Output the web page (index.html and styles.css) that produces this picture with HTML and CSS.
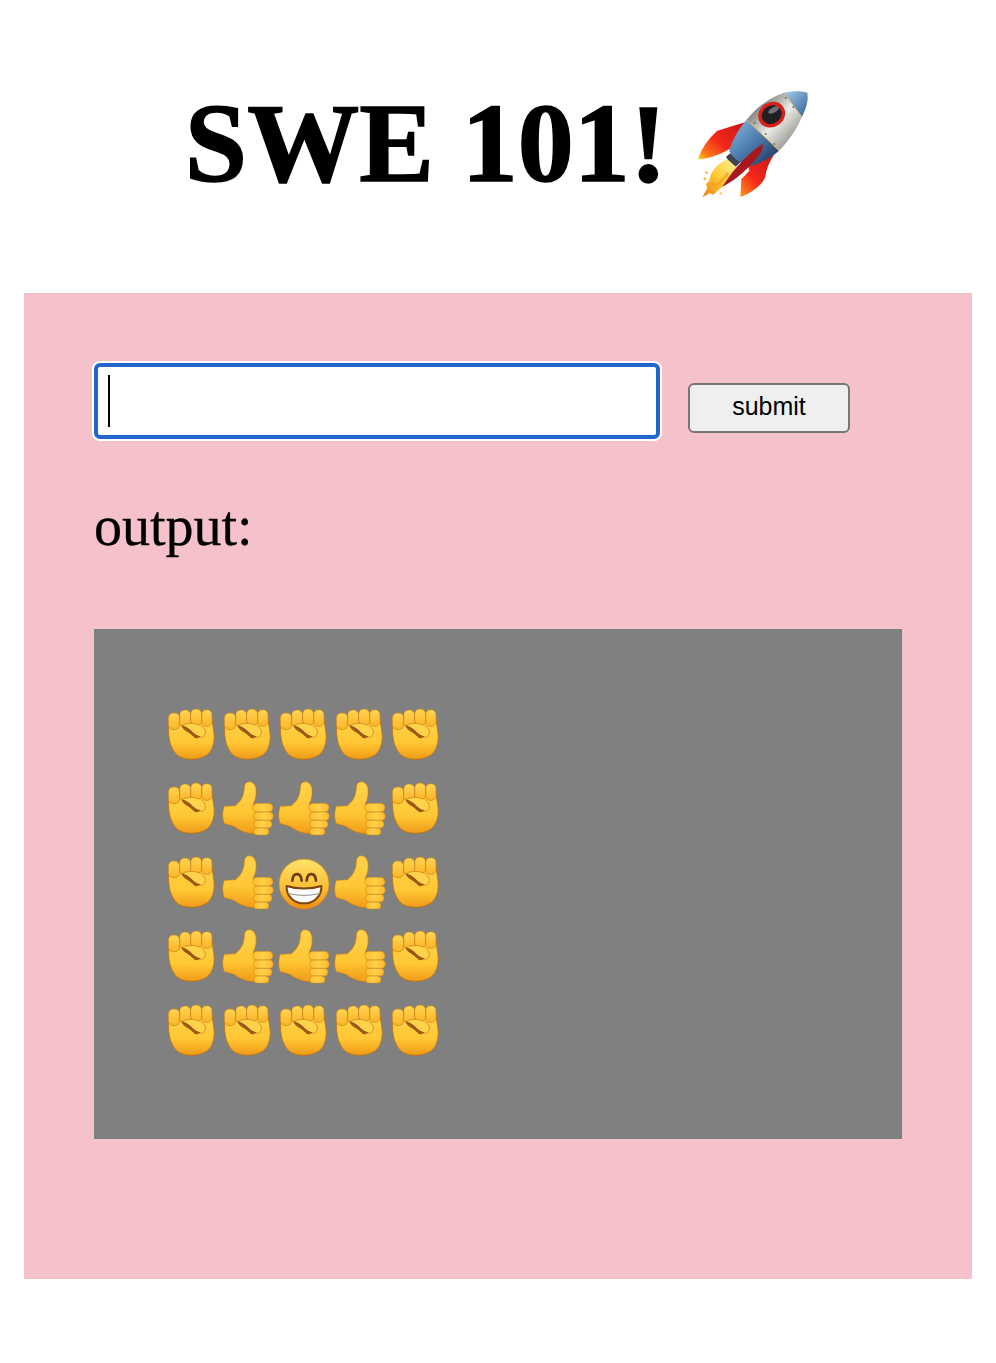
FILE: index.html
```html
<!DOCTYPE html>
<html lang="en">
<head>
<meta charset="utf-8">
<title>SWE 101!</title>
<link rel="stylesheet" href="styles.css">
</head>
<body>
<svg class="defs" aria-hidden="true">
  <defs>
    <linearGradient id="skin" x1="0" y1="0" x2="0" y2="1"><stop offset="0" stop-color="#ffd24c"/><stop offset=".6" stop-color="#ffc733"/><stop offset="1" stop-color="#f09a18"/></linearGradient>
    <linearGradient id="finger" x1="0" y1="0" x2="0" y2="1"><stop offset="0" stop-color="#ffd552"/><stop offset="1" stop-color="#fdb428"/></linearGradient>
    <linearGradient id="digit" x1="0" y1="0" x2="1" y2="0"><stop offset="0" stop-color="#ffbd2e"/><stop offset=".5" stop-color="#ffd149"/><stop offset="1" stop-color="#fdb92d"/></linearGradient>
    <linearGradient id="face" x1="0" y1="0" x2="0" y2="1"><stop offset="0" stop-color="#ffe36b"/><stop offset=".6" stop-color="#fdbc33"/><stop offset="1" stop-color="#ee8a10"/></linearGradient>
    <linearGradient id="silver" x1="0" y1="0" x2="1" y2="1"><stop offset="0" stop-color="#5d5d5a"/><stop offset=".25" stop-color="#8f8f8a"/><stop offset=".52" stop-color="#ecece6"/><stop offset=".78" stop-color="#a5a5a0"/><stop offset="1" stop-color="#55554f"/></linearGradient>
    <linearGradient id="steel" x1="0" y1="0" x2="1" y2="1"><stop offset="0" stop-color="#8cbce0"/><stop offset=".5" stop-color="#4a7aab"/><stop offset="1" stop-color="#142c50"/></linearGradient>
    <linearGradient id="nose" x1="0" y1="0" x2="1" y2="1"><stop offset="0" stop-color="#a8cde8"/><stop offset="1" stop-color="#2f6298"/></linearGradient>
    <linearGradient id="finL" x1="1" y1="0" x2="0" y2="1"><stop offset="0" stop-color="#c41618"/><stop offset=".55" stop-color="#f5281a"/><stop offset=".85" stop-color="#fb7a16"/><stop offset="1" stop-color="#ffd21c"/></linearGradient>
    <linearGradient id="finR" x1="1" y1="0" x2="0" y2="1"><stop offset="0" stop-color="#c41618"/><stop offset=".6" stop-color="#f8281a"/><stop offset="1" stop-color="#ff9a1c"/></linearGradient>
    <linearGradient id="flame" x1="1" y1="0" x2="0" y2="1"><stop offset="0" stop-color="#fff4a0"/><stop offset=".5" stop-color="#ffcb36"/><stop offset="1" stop-color="#ef7c12"/></linearGradient>

    <symbol id="fist" viewBox="9 12 168 180">
      <path d="M26 78C24 112 30 145 52 166C72 182 118 182 142 164C160 150 166 120 161 92L155 52L60 60Z" fill="url(#skin)" stroke="#b97412" stroke-width="2.5"/>
      <rect x="25" y="39" width="34" height="50" rx="15" fill="url(#finger)" stroke="#c77f16" stroke-width="2"/>
      <rect x="59" y="30" width="33" height="52" rx="15" fill="url(#finger)" stroke="#c77f16" stroke-width="2"/>
      <rect x="92" y="27" width="33" height="50" rx="15" fill="url(#finger)" stroke="#c77f16" stroke-width="2"/>
      <rect x="125" y="29" width="31" height="50" rx="14" fill="url(#finger)" stroke="#c77f16" stroke-width="2"/>
      <path d="M66 76C82 68 114 68 128 80C140 92 138 110 124 112C110 112 100 100 92 92C82 86 72 82 66 76Z" fill="#ffd24c" stroke="#d08a18" stroke-width="2.5"/>
      <path d="M64 76C76 78 85 84 94 92C102 100 112 108 122 108C116 114 110 116 104 113C98 108 92 102 84 97C74 92 67 85 64 76Z" fill="#995614"/>
    </symbol>

    <symbol id="thumb" viewBox="177 234 168 180">
      <path d="M193 319L226 317C240 306 252 292 253 262C254 238 284 240 288 266C290 284 287 298 280 312L300 400C270 404 245 396 226 382C212 374 198 374 192 370C186 352 187 334 193 319Z" fill="url(#skin)" stroke="#c77f16" stroke-width="2"/>
      <rect x="278" y="310" width="61" height="26" rx="13" fill="url(#digit)" stroke="#c77f16" stroke-width="1.5"/>
      <rect x="281" y="336" width="59" height="25" rx="12" fill="url(#digit)" stroke="#c77f16" stroke-width="1.5"/>
      <rect x="281" y="361" width="55" height="23" rx="11" fill="url(#digit)" stroke="#c77f16" stroke-width="1.5"/>
      <rect x="281" y="384" width="46" height="21" rx="10" fill="url(#digit)" stroke="#c77f16" stroke-width="1.5"/>
    </symbol>

    <symbol id="grin" viewBox="15 6 168 180">
      <circle cx="102" cy="102" r="75" fill="url(#face)" stroke="#d9860f" stroke-width="2"/>
      <path d="M67 92C69 66 93 66 95 92M110 92C112 66 136 66 138 92" fill="none" stroke="#6b3c0c" stroke-width="8" stroke-linecap="round"/>
      <path d="M50 108C80 118 124 118 154 108C156 140 130 160 102 160C74 160 48 140 50 108Z" fill="#fff" stroke="#7a4510" stroke-width="6" stroke-linejoin="round"/>
      <path d="M54 130C84 138 120 138 150 130" fill="none" stroke="#8d8d8d" stroke-width="3"/>
    </symbol>
  </defs>
</svg>

<h1 class="title">
  <span class="title-text">SWE 101!</span>
  <svg class="rocket" viewBox="30 0 363 375" role="img" aria-label="rocket">
    <path d="M197 120L112 146C84 170 62 204 54 232C92 232 130 212 170 190Z" fill="url(#finL)"/>
    <path d="M282 218L204 250L208 266L184 292L181 345C216 332 246 310 256 284C258 262 268 240 282 218Z" fill="url(#finR)"/>
    <path d="M138 224L161 206L184 238L160 262Z" fill="#3f444c"/>
    <path d="M142 232C112 244 92 268 88 296L78 306L82 318L67 346L88 334L100 338L118 322C146 304 164 282 172 258Z" fill="url(#flame)"/>
    <path d="M96 304C110 316 128 298 144 272" fill="none" stroke="#f49a1c" stroke-width="8" opacity=".7"/>
    <circle cx="80" cy="272" r="3.5" fill="#f9a11c"/><circle cx="74" cy="290" r="3.5" fill="#f9a11c"/><circle cx="122" cy="334" r="3.5" fill="#ffc52e"/>
    <path d="M200 113C176 140 154 178 148 208C160 230 186 250 212 252C246 242 276 224 297 206Z" fill="url(#steel)"/>
    <path d="M200 113C232 74 270 46 312 32L366 104C348 146 324 178 297 206Z" fill="url(#silver)"/>
    <path d="M312 32C338 26 366 26 382 32C386 56 378 80 366 104Z" fill="url(#nose)"/>
    <path d="M200 113L297 206" stroke="#e2b23c" stroke-width="2.5" fill="none"/>
    <path d="M312 32L366 104" stroke="#c9a24a" stroke-width="2" fill="none"/>
    <ellipse cx="275" cy="98" rx="42" ry="37" transform="rotate(-35 275 98)" fill="#d9201c"/>
    <ellipse cx="275" cy="98" rx="31" ry="27" transform="rotate(-35 275 98)" fill="#1f1f24"/>
    <ellipse cx="281" cy="84" rx="18" ry="8" transform="rotate(-30 281 84)" fill="#6f6f75"/>
    <path d="M249 185C214 206 164 254 127 314C170 292 216 252 246 206Z" fill="#a8181e"/>
    <g fill="#70706c"><circle cx="224" cy="123" r="3"/><circle cx="257" cy="156" r="3"/><circle cx="283" cy="186" r="3"/><circle cx="340" cy="75" r="3"/><circle cx="317" cy="47" r="3"/></g>
  </svg>
</h1>

<main class="panel">
  <form class="entry">
    <div class="field">
      <input class="text-input" type="text" aria-label="input">
      <span class="caret"></span>
    </div>
    <button class="submit" type="button">submit</button>
  </form>
  <p class="label">output:</p>
  <section class="output">
    <div class="grid">
      <svg class="cell"><use href="#fist"/></svg><svg class="cell"><use href="#fist"/></svg><svg class="cell"><use href="#fist"/></svg><svg class="cell"><use href="#fist"/></svg><svg class="cell"><use href="#fist"/></svg>
      <svg class="cell"><use href="#fist"/></svg><svg class="cell"><use href="#thumb"/></svg><svg class="cell"><use href="#thumb"/></svg><svg class="cell"><use href="#thumb"/></svg><svg class="cell"><use href="#fist"/></svg>
      <svg class="cell"><use href="#fist"/></svg><svg class="cell"><use href="#thumb"/></svg><svg class="cell"><use href="#grin"/></svg><svg class="cell"><use href="#thumb"/></svg><svg class="cell"><use href="#fist"/></svg>
      <svg class="cell"><use href="#fist"/></svg><svg class="cell"><use href="#thumb"/></svg><svg class="cell"><use href="#thumb"/></svg><svg class="cell"><use href="#thumb"/></svg><svg class="cell"><use href="#fist"/></svg>
      <svg class="cell"><use href="#fist"/></svg><svg class="cell"><use href="#fist"/></svg><svg class="cell"><use href="#fist"/></svg><svg class="cell"><use href="#fist"/></svg><svg class="cell"><use href="#fist"/></svg>
    </div>
  </section>
</main>
</body>
</html>
```
FILE: styles.css
```css
* {
  box-sizing: border-box;
}

html,
body {
  height: 100%;
}

body {
  margin: 0;
  padding: 0 24px;
  background: #fff;
  color: #000;
  font-family: "Liberation Serif", "Times New Roman", serif;
  overflow: hidden;
}

.defs {
  position: absolute;
  width: 0;
  height: 0;
}

.title {
  display: flex;
  justify-content: center;
  align-items: center;
  gap: 23px;
  height: 293px;
  margin: 0;
  font-size: 112px;
  font-weight: 700;
  line-height: 1;
}

.title-text {
  margin-top: -8px;
  -webkit-text-stroke: 1.5px #000;
}

.rocket {
  width: 121px;
  height: 125px;
  flex: none;
  margin-top: -4px;
}

.panel {
  height: 986px;
  padding: 70px 70px 0;
  background: #f5c2cc;
}

.entry {
  display: flex;
  align-items: flex-start;
  gap: 28px;
  margin: 0;
}

.field {
  position: relative;
  width: 566px;
  height: 76px;
}

.text-input {
  display: block;
  width: 100%;
  height: 100%;
  border: 4px solid #2266cc;
  border-radius: 6px;
  background: #fff;
  box-shadow: 0 0 0 2px #fff;
  outline: none;
}

.caret {
  position: absolute;
  left: 14px;
  top: 12px;
  width: 2px;
  height: 52px;
  background: #000;
}

.submit {
  width: 162px;
  height: 50px;
  margin-top: 20px;
  padding: 0 0 3px;
  border: 2px solid #767676;
  border-radius: 6px;
  background: #efefef;
  color: #000;
  font-family: "Liberation Sans", Arial, sans-serif;
  font-size: 25px;
}

.label {
  margin: 55px 0 0;
  font-size: 56px;
  line-height: 64px;
  -webkit-text-stroke: 0.3px #000;
}

.output {
  width: 808px;
  height: 510px;
  margin-top: 71px;
  padding: 75px 69px 0;
  background: #808080;
}

.grid {
  display: grid;
  grid-template-columns: repeat(5, 56px);
  grid-auto-rows: 60px;
  row-gap: 14px;
}

.cell {
  display: block;
  width: 56px;
  height: 60px;
}
```
